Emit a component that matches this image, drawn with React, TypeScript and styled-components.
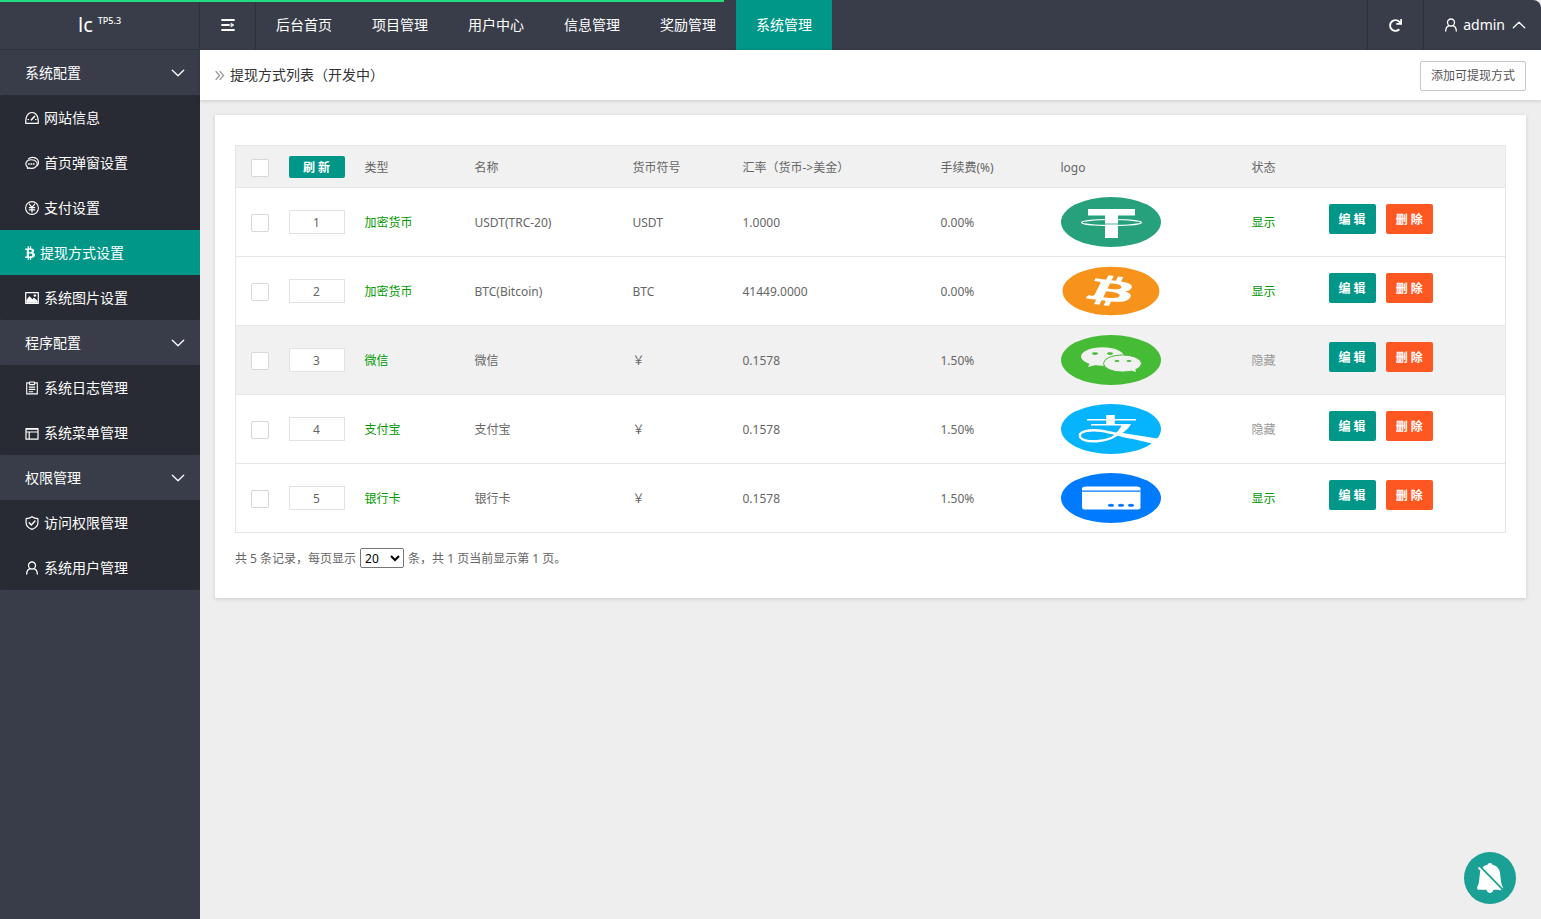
import React from 'react';
import styled, { createGlobalStyle, css } from 'styled-components';
import { FaBitcoin, FaBtc, FaRedo } from 'react-icons/fa';

const GlobalStyle = createGlobalStyle`
  *, *::before, *::after { box-sizing: border-box; }
  body {
    margin: 0;
    background: #eee;
    color: #666;
    font: 12px/24px "Noto Sans", "Noto Sans CJK SC", sans-serif;
  }
  a { color: inherit; text-decoration: none; }
  button, input, select { font: inherit; margin: 0; }
  svg { display: block; flex: none; }
`;

/* ---------- shell ---------- */

const Shell = styled.div`
  display: flex;
  min-height: 100vh;
`;

const Progress = styled.div`
  position: fixed;
  top: 0;
  left: 0;
  z-index: 10;
  width: 47%;
  height: 2px;
  background: #22dd80;
`;

const Sidebar = styled.aside`
  flex: none;
  width: 200px;
  background: #393d49;
  color: #fff;
  font-size: 14px;
`;

const Brand = styled.a`
  display: flex;
  justify-content: center;
  align-items: center;
  gap: 5px;
  height: 50px;
  border-right: 1px solid #2e313b;
  border-bottom: 1px solid #2e313b;
  font-size: 20px;
`;

const Version = styled.sup`
  font-size: 9px;
  font-weight: 500;
  line-height: 12px;
  padding-bottom: 8px;
  vertical-align: baseline;
`;

const GroupButton = styled.button`
  display: flex;
  justify-content: space-between;
  align-items: center;
  width: 100%;
  height: 45px;
  padding: 0 15px 0 25px;
  border: 0;
  background: none;
  color: inherit;
  cursor: pointer;
`;

const SubMenu = styled.ul`
  margin: 0;
  padding: 0;
  list-style: none;
  border-radius: 2px;
  background: #282b33;
`;

const MenuLink = styled.a<{ $active?: boolean }>`
  display: flex;
  align-items: center;
  gap: 5px;
  height: 45px;
  padding: 0 25px;
  background: ${(p) => (p.$active ? '#009688' : 'transparent')};
`;

const Main = styled.div`
  flex: 1;
  min-width: 0;
  display: flex;
  flex-direction: column;
`;

const TopBar = styled.header`
  display: flex;
  height: 50px;
  border-top-right-radius: 8px;
  background: #393d49;
  color: #fff;
  font-size: 14px;
`;

const barItem = css`
  display: flex;
  align-items: center;
  justify-content: center;
  height: 50px;
  border: 0;
  background: none;
  color: inherit;
  cursor: pointer;
`;

const BarIconButton = styled.button<{ $edge: 'left' | 'right' }>`
  ${barItem}
  width: 56px;
  padding: 0;
  ${(p) => `border-${p.$edge}: 1px solid #2e313b;`}
`;

const Nav = styled.nav`
  flex: 1;
  display: flex;
`;

const NavLink = styled.a<{ $active?: boolean }>`
  ${barItem}
  padding: 0 20px;
  white-space: nowrap;
  background: ${(p) => (p.$active ? '#009688' : 'transparent')};
`;

const UserButton = styled.button`
  ${barItem}
  gap: 5px;
  padding: 0 15px 0 20px;
  border-left: 1px solid #2e313b;
`;

const UserName = styled.span`
  padding-right: 2px;
`;

/* ---------- content ---------- */

const PageHead = styled.div`
  display: flex;
  align-items: center;
  justify-content: space-between;
  height: 50px;
  padding: 0 15px;
  background: #fff;
  box-shadow: 0 1px 4px rgba(0, 0, 0, 0.15);
`;

const Title = styled.h1`
  display: flex;
  align-items: center;
  gap: 5px;
  margin: 0;
  color: #333;
  font-size: 14px;
  font-weight: 400;
`;

const OutlineButton = styled.button`
  height: 30px;
  margin-top: 2px;
  padding: 0 9px;
  border: 1px solid #c9c9c9;
  border-radius: 2px;
  background: #fff;
  color: #555;
  line-height: 28px;
  min-width: 106px;
  cursor: pointer;
`;

const Card = styled.section`
  margin: 15px;
  padding: 30px 20px;
  background: #fff;
  box-shadow: 0 1px 4px rgba(0, 0, 0, 0.15);
`;

const Table = styled.table`
  width: 100%;
  table-layout: fixed;
  border-collapse: collapse;
  border: 1px solid #e6e6e6;
`;

const Col = styled.col<{ $w?: number }>`
  width: ${(p) => (p.$w ? `${p.$w}px` : 'auto')};
`;

const Row = styled.tr<{ $shaded?: boolean; $head?: boolean }>`
  height: ${(p) => (p.$head ? 42 : 69)}px;
  background: ${(p) => (p.$shaded || p.$head ? '#f1f1f1' : '#fff')};
  border-bottom: 1px solid #e6e6e6;
`;

const cell = css`
  padding: 0 10px;
  text-align: left;
  font-weight: 400;
  white-space: nowrap;
`;

const Th = styled.th`
  ${cell}
`;

const Td = styled.td`
  ${cell}
`;

const TextTh = styled(Th)`
  padding-top: 2px;
`;

const TextTd = styled(Td)<{ $tone?: 'green' | 'muted' }>`
  padding-top: 2px;
  color: ${(p) => (p.$tone === 'green' ? '#090' : p.$tone === 'muted' ? '#999' : 'inherit')};
`;

const Check = styled.input.attrs({ type: 'checkbox' })`
  display: block;
  appearance: none;
  width: 18px;
  height: 18px;
  margin: 2px 0 0 5px;
  border: 1px solid #d8d8d8;
  border-radius: 2px;
  background: #fff;
  &:checked { background: #009688; }
`;

const SortInput = styled.input`
  display: block;
  width: 56px;
  height: 24px;
  padding: 1px 0 0;
  border: 1px solid #e2e2e2;
  border-radius: 0;
  background: #fff;
  color: #666;
  text-align: center;
`;

const SolidButton = styled.button<{ $danger?: boolean; $small?: boolean }>`
  display: block;
  height: ${(p) => (p.$small ? 22 : 30)}px;
  width: ${(p) => (p.$small ? '56px' : 'auto')};
  padding: 2px 10px 0;
  border: 0;
  border-radius: 2px;
  background: ${(p) => (p.$danger ? '#ff5722' : '#009688')};
  color: #fff;
  font-weight: 600;
  line-height: 20px;
  cursor: pointer;
`;

const Actions = styled.div`
  display: flex;
  gap: 10px;
  padding-bottom: 6px;
`;

const Pager = styled.div`
  display: flex;
  align-items: center;
  gap: 4px;
  height: 20px;
  margin-top: 15px;
`;

const pagerText = css`
  padding-top: 2px;
`;

const PagerLabel = styled.label`
  ${pagerText}
`;

const PagerText = styled.span`
  ${pagerText}
`;

const PageSize = styled.select`
  width: 44px;
  height: 20px;
  padding: 0;
  border: 1px solid #767676;
  border-radius: 2px;
  background: #fff;
  color: #000;
`;

const BellButton = styled.button`
  position: fixed;
  right: 25px;
  bottom: 15px;
  display: flex;
  align-items: center;
  justify-content: center;
  width: 52px;
  height: 52px;
  padding: 0;
  border: 0;
  border-radius: 50%;
  background: #1aa094;
  cursor: pointer;
`;

/* ---------- icons ---------- */

const Line = styled.svg.attrs({ 'aria-hidden': true })`
  fill: none;
  stroke: currentColor;
  stroke-linecap: round;
  stroke-linejoin: round;
`;

const GaugeIcon = () => (
  <Line width="14" height="14" viewBox="0 0 14 14" strokeWidth="1.2">
    <path d="M.8 12.400C.3 6 2.500 1.500 7 1.500s6.700 4.500 6.200 10.900z" />
    <path d="M6.400 8.800 9.600 5.400" strokeWidth="1.600" />
    <path d="M3 8.500h.6M10.600 8.500h.6" />
  </Line>
);

const ChatIcon = () => (
  <Line width="14" height="14" viewBox="0 0 14 14" strokeWidth="1.1">
    <path d="M3.400 3C5.500.8 10 .8 12.200 3.200c1.500 1.900 1.500 4.600 0 6.400" />
    <path d="M2.400 11C-.6 8.200 1 3.800 6.200 3.800s7.400 3.800 5 6.600c-1.600 1.900-4.400 2.300-6.600 1.500l-2.200.5z" />
    <path d="M3.600 7.900h.6M6 7.900h.6M8.400 7.900H9" strokeWidth="1.500" />
  </Line>
);

const YenIcon = () => (
  <Line width="14" height="14" viewBox="0 0 14 14" strokeWidth="1.1">
    <circle cx="7" cy="7" r="6.400" />
    <path d="M4.300 3.200 7 6.400l2.700-3.200M7 6.400V11M4.300 6.700h5.400M4.300 8.900h5.400" strokeWidth="1.200" />
  </Line>
);

const PictureIcon = () => (
  <Line width="14" height="14" viewBox="0 0 14 14" strokeWidth="1.2">
    <path d="M.7 1.600h12.600v10.800H.7z" />
    <path d="M1.800 11.200V9l2.800-3.400L7.200 8.600l1.800-1.400 3.200 2.600v1.400z" fill="currentColor" strokeWidth=".8" />
    <circle cx="9.800" cy="4.600" r="1" fill="currentColor" strokeWidth=".5" />
  </Line>
);

const ClipboardIcon = () => (
  <Line width="14" height="14" viewBox="0 0 14 14" strokeWidth="1.1">
    <path d="M4.400 1.900H1.700v11h10.600v-11H9.600M4.600 1h4.800v2.600H4.600zM4.200 6.100h5.600M4.200 8.400h5.600M4.200 10.700h3.600" />
  </Line>
);

const WindowIcon = () => (
  <Line width="14" height="14" viewBox="0 0 14 14" strokeWidth="1.2">
    <path d="M1 2.500h12v10.700H1zM1 6h12M4.200 6v7.200M1 3.200h12" />
  </Line>
);

const ShieldIcon = () => (
  <Line width="14" height="14" viewBox="0 0 14 14" strokeWidth="1.2">
    <path d="M7 .7c1.800 1.300 3.800 1.800 5.900 1.900v4.200c0 3-2.400 5.300-5.900 6.600C3.500 12.100 1.100 9.800 1.100 6.800V2.600C3.200 2.500 5.200 2 7 .7z" />
    <path d="m4.200 6.800 2.100 2.100 3.700-3.900" strokeWidth="1.400" />
  </Line>
);

const UserIcon = () => (
  <Line width="14" height="14" viewBox="0 0 14 14" strokeWidth="1.3">
    <circle cx="7" cy="4.500" r="3.500" />
    <path d="M1.700 13c.1-2.900 1.500-4.700 3.400-5.300M12.300 13c-.1-2.900-1.500-4.700-3.400-5.300" />
  </Line>
);

const Chevron = ({ up }: { up?: boolean }) => (
  <Line width="14" height="8" viewBox="0 0 14 8" strokeWidth="1.300">
    <path d={up ? 'M1.300 6.700 7 1.300l5.700 5.400' : 'M1.300 1.300 7 6.700l5.700-5.400'} />
  </Line>
);

const ToggleIcon = () => (
  <Line width="14" height="12" viewBox="0 0 14 12" strokeWidth="1.800">
    <path d="M1 1h12M1 6h7M1 11h12" />
    <path d="M10.200 4.200 13 6l-2.800 1.800z" fill="currentColor" strokeWidth=".6" />
  </Line>
);

const AngleIcon = () => (
  <Line width="10" height="10" viewBox="0 0 10 10" strokeWidth="1.200" color="#999">
    <path d="m1 1.500 3.500 4L1 9.500M5 1.500l3.500 4L5 9.500" />
  </Line>
);

const BellOffIcon = () => (
  <svg width="28" height="32" viewBox="0 0 28 32" aria-hidden="true">
    <path
      fill="#fff"
      d="M14 1c1.300 0 2.200.7 2.400 1.800C21.500 4 24 7.500 24.200 12.500l1 8.500 1.600 4.200c.5 1.500-.2 2.600-1.800 2.600h-7.500c-.5 2-1.700 3.200-3.500 3.200s-3-1.200-3.500-3.200H3c-1.600 0-2.300-1.100-1.800-2.600L2.800 21l1-8.500C4 7.500 6.500 4 11.600 2.800 11.800 1.700 12.700 1 14 1z"
    />
    <path d="M3.800 4.300 26.500 27.500" stroke="#1aa094" strokeWidth="2" />
    <path d="M2.500 5.500 24.500 28" stroke="#fff" strokeWidth="1.800" />
  </svg>
);

/* ---------- payment logos ---------- */

const Logo = ({ color, children }: { color: string; children: React.ReactNode }) => (
  <svg width="100" height="50" viewBox="0 0 100 50" aria-hidden="true">
    <ellipse cx="50" cy="25" rx="50" ry="25" fill={color} />
    {children}
  </svg>
);

const TetherLogo = () => (
  <Logo color="#26a17b">
    <path d="M27 12h47v6.500H57V41H44V18.500H27z" fill="#fff" />
    <ellipse cx="50.500" cy="25.500" rx="30" ry="3" fill="none" stroke="#fff" strokeWidth="1.200" />
    <path d="M44 27h13" stroke="#26a17b" strokeWidth=".8" />
  </Logo>
);

const BitcoinLogo = () => (
  <FaBitcoin preserveAspectRatio="none" color="#f7931a" width="100" height="50" style={{ width: 100, height: 50 }} aria-hidden />
);

const WechatLogo = () => (
  <Logo color="#46bb36">
    <g fill="#f1f1f1">
      <ellipse cx="41.500" cy="21.500" rx="21.500" ry="9.300" />
      <path d="m29 28-2 4 8-2z" />
      <ellipse cx="61.500" cy="28.500" rx="19" ry="8.600" stroke="#46bb36" strokeWidth="1" />
      <path d="m69 35 6 2-1-4z" />
    </g>
    <g fill="#46bb36">
      <ellipse cx="34" cy="18.600" rx="3" ry="1.300" />
      <ellipse cx="49" cy="18.600" rx="3" ry="1.300" />
      <ellipse cx="56" cy="26" rx="2.500" ry="1.100" />
      <ellipse cx="68" cy="26" rx="2.500" ry="1.100" />
    </g>
  </Logo>
);

const AlipayLogo = () => (
  <Logo color="#06b4fd">
    <g fill="none" stroke="#fff">
      <path d="M26 15.700h49M30 20.700h36" strokeWidth="1.600" />
      <path d="M49.500 11v10" strokeWidth="8.500" />
      <path d="M62 26C56 32 48 36 38 37 27 38 19 36 18.800 31.500 18.600 27 30 25.300 40 26.800c10 1.600 20 4.600 30 6.700" strokeWidth="2.400" />
    </g>
    <path d="M61 20h9c-2 4-5 6.500-8.500 9L98 34.800 91 39.500 53 30.500c3.500-2.600 6.500-6 8-10.500z" fill="#fff" />
  </Logo>
);

const CardLogo = () => (
  <Logo color="#007aff">
    <rect x="21" y="13.500" width="58.500" height="23" rx="4" ry="2" fill="#fff" />
    <path d="M21 18.200h58.500" stroke="#007aff" strokeWidth="1.200" />
    <g fill="#007aff">
      <ellipse cx="50" cy="32.200" rx="3" ry="1.500" />
      <ellipse cx="60" cy="32.200" rx="3" ry="1.500" />
      <ellipse cx="70" cy="32.200" rx="3" ry="1.500" />
    </g>
  </Logo>
);

/* ---------- data ---------- */

const navItems = ['后台首页', '项目管理', '用户中心', '信息管理', '奖励管理', '系统管理'];

const groups: { title: string; items: { label: string; icon: React.ReactNode; active?: boolean }[] }[] = [
  {
    title: '系统配置',
    items: [
      { label: '网站信息', icon: <GaugeIcon /> },
      { label: '首页弹窗设置', icon: <ChatIcon /> },
      { label: '支付设置', icon: <YenIcon /> },
      { label: '提现方式设置', icon: <FaBtc width="10" height="14" style={{ width: 10, height: 14 }} aria-hidden />, active: true },
      { label: '系统图片设置', icon: <PictureIcon /> },
    ],
  },
  {
    title: '程序配置',
    items: [
      { label: '系统日志管理', icon: <ClipboardIcon /> },
      { label: '系统菜单管理', icon: <WindowIcon /> },
    ],
  },
  {
    title: '权限管理',
    items: [
      { label: '访问权限管理', icon: <ShieldIcon /> },
      { label: '系统用户管理', icon: <UserIcon /> },
    ],
  },
];

const rows = [
  { type: '加密货币', name: 'USDT(TRC-20)', symbol: 'USDT', rate: '1.0000', fee: '0.00%', logo: <TetherLogo />, shown: true },
  { type: '加密货币', name: 'BTC(Bitcoin)', symbol: 'BTC', rate: '41449.0000', fee: '0.00%', logo: <BitcoinLogo />, shown: true },
  { type: '微信', name: '微信', symbol: '￥', rate: '0.1578', fee: '1.50%', logo: <WechatLogo />, shown: false, shaded: true },
  { type: '支付宝', name: '支付宝', symbol: '￥', rate: '0.1578', fee: '1.50%', logo: <AlipayLogo />, shown: false },
  { type: '银行卡', name: '银行卡', symbol: '￥', rate: '0.1578', fee: '1.50%', logo: <CardLogo />, shown: true },
];

const columnWidths = [43, 76, 110, 158, 110, 198, 120, 191, 77];
const headings = ['类型', '名称', '货币符号', '汇率（货币->美金）', '手续费(%)', 'logo', '状态'];

export default function App() {
  return (
    <>
      <GlobalStyle />
      <Progress />
      <Shell>
        <Sidebar>
          <Brand href="#">
            lc <Version>TP5.3</Version>
          </Brand>
          {groups.map((group) => (
            <div key={group.title}>
              <GroupButton type="button">
                {group.title}
                <Chevron />
              </GroupButton>
              <SubMenu>
                {group.items.map((item) => (
                  <li key={item.label}>
                    <MenuLink href="#" $active={item.active}>
                      {item.icon}
                      {item.label}
                    </MenuLink>
                  </li>
                ))}
              </SubMenu>
            </div>
          ))}
        </Sidebar>
        <Main>
          <TopBar>
            <BarIconButton type="button" $edge="right" aria-label="收起菜单">
              <ToggleIcon />
            </BarIconButton>
            <Nav>
              {navItems.map((label) => (
                <NavLink key={label} href="#" $active={label === '系统管理'}>
                  {label}
                </NavLink>
              ))}
            </Nav>
            <BarIconButton type="button" $edge="left" aria-label="刷新页面">
              <FaRedo size={13} aria-hidden />
            </BarIconButton>
            <UserButton type="button">
              <UserIcon />
              <UserName>admin</UserName>
              <Chevron up />
            </UserButton>
          </TopBar>
          <PageHead>
            <Title>
              <AngleIcon />
              提现方式列表（开发中）
            </Title>
            <OutlineButton type="button">添加可提现方式</OutlineButton>
          </PageHead>
          <Card>
            <Table>
              <colgroup>
                {columnWidths.map((w, i) => (
                  <Col key={i} $w={w} />
                ))}
                <Col />
              </colgroup>
              <thead>
                <Row $head>
                  <Th>
                    <Check aria-label="全选" />
                  </Th>
                  <Th>
                    <SolidButton type="button" $small>
                      刷 新
                    </SolidButton>
                  </Th>
                  {headings.map((h) => (
                    <TextTh key={h}>{h}</TextTh>
                  ))}
                  <Th />
                </Row>
              </thead>
              <tbody>
                {rows.map((row, i) => (
                  <Row key={row.name} $shaded={row.shaded}>
                    <Td>
                      <Check aria-label={`选择 ${row.name}`} />
                    </Td>
                    <Td>
                      <SortInput defaultValue={i + 1} aria-label={`排序 ${row.name}`} />
                    </Td>
                    <TextTd $tone="green">{row.type}</TextTd>
                    <TextTd>{row.name}</TextTd>
                    <TextTd>{row.symbol}</TextTd>
                    <TextTd>{row.rate}</TextTd>
                    <TextTd>{row.fee}</TextTd>
                    <Td>{row.logo}</Td>
                    <TextTd $tone={row.shown ? 'green' : 'muted'}>{row.shown ? '显示' : '隐藏'}</TextTd>
                    <Td>
                      <Actions>
                        <SolidButton type="button">编 辑</SolidButton>
                        <SolidButton type="button" $danger>
                          删 除
                        </SolidButton>
                      </Actions>
                    </Td>
                  </Row>
                ))}
              </tbody>
            </Table>
            <Pager>
              <PagerLabel htmlFor="page-size">共 5 条记录，每页显示</PagerLabel>
              <PageSize id="page-size" defaultValue="20">
                <option value="10">10</option>
                <option value="20">20</option>
                <option value="50">50</option>
              </PageSize>
              <PagerText>条，共 1 页当前显示第 1 页。</PagerText>
            </Pager>
          </Card>
        </Main>
      </Shell>
      <BellButton type="button" aria-label="消息提醒已关闭">
        <BellOffIcon />
      </BellButton>
    </>
  );
}
